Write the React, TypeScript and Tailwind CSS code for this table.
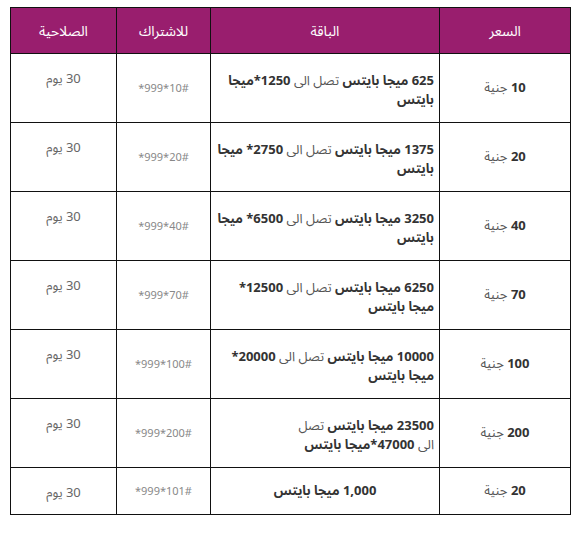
const rows = [
  {
    price: '10',
    lines: [
      [['625 ميجا بايتس', true], [' تصل الى ', false], ['1250*ميجا', true]],
      [['بايتس', true]],
    ],
    code: '*999*10#',
  },
  {
    price: '20',
    lines: [
      [['1375 ميجا بايتس', true], [' تصل الى ', false], ['2750* ميجا', true]],
      [['بايتس', true]],
    ],
    code: '*999*20#',
  },
  {
    price: '40',
    lines: [
      [['3250 ميجا بايتس', true], [' تصل الى ', false], ['6500* ميجا', true]],
      [['بايتس', true]],
    ],
    code: '*999*40#',
  },
  {
    price: '70',
    lines: [
      [['6250 ميجا بايتس', true], [' تصل الى ', false], ['12500*', true]],
      [['ميجا بايتس', true]],
    ],
    code: '*999*70#',
  },
  {
    price: '100',
    lines: [
      [['10000 ميجا بايتس', true], [' تصل الى ', false], ['20000*', true]],
      [['ميجا بايتس', true]],
    ],
    code: '*999*100#',
  },
  {
    price: '200',
    lines: [
      [['23500 ميجا بايتس', true], [' تصل', false]],
      [['الى ', false], ['47000*ميجا بايتس', true]],
    ],
    code: '*999*200#',
  },
] as const

const cell = 'border border-[#111]'

const App: React.FC = () => {
  return (
    <div
      className="min-h-[541px] w-[584px] bg-white pl-[10px] pt-[7px]"
      style={{ fontFamily: '"Noto Sans", "Noto Sans Arabic", "DejaVu Sans", sans-serif' }}
    >
      <table dir="rtl" className="w-[560px] table-fixed border-collapse text-[13px] text-[#555]">
        <colgroup>
          <col className="w-[131px]" />
          <col className="w-[229px]" />
          <col className="w-[94px]" />
          <col className="w-[106px]" />
        </colgroup>
        <thead>
          <tr className="h-[46px] bg-[#991e6e] text-[14px] text-white">
            <th className={`${cell} font-normal`}>السعر</th>
            <th className={`${cell} font-normal`}>الباقة</th>
            <th className={`${cell} font-normal`}>للاشتراك</th>
            <th className={`${cell} font-normal`}>الصلاحية</th>
          </tr>
        </thead>
        <tbody>
          {rows.map((row) => (
            <tr key={row.code} className="h-[69px]">
              {/* السعر */}
              <td className={`${cell} text-center align-middle`}>
                <span className="font-bold text-[#333]">{row.price}</span> جنية
              </td>
              {/* الباقة */}
              <td className={`${cell} pr-[5px] pt-[3px] text-right align-middle`}>
                {row.lines.map((line, i) => (
                  <div key={i} className="h-[19px] overflow-visible whitespace-nowrap leading-[19px]">
                    {line.map(([txt, bold], j) => (
                      <span key={j} className={bold ? 'font-bold text-[#333]' : ''}>
                        {txt}
                      </span>
                    ))}
                  </div>
                ))}
              </td>
              {/* للاشتراك */}
              <td className={`${cell} text-center align-middle text-[11px] text-[#888]`}>
                <span dir="ltr">{row.code}</span>
              </td>
              {/* الصلاحية */}
              <td className={`${cell} pt-[14px] text-center align-top leading-[20px] text-[#666]`}>
                30 يوم
              </td>
            </tr>
          ))}
          <tr className="h-[47px]">
            <td className={`${cell} text-center align-middle`}>
              <span className="font-bold text-[#333]">20</span> جنية
            </td>
            <td className={`${cell} text-center align-middle`}>
              <span className="font-bold text-[#333]">1,000 ميجا بايتس</span>
            </td>
            <td className={`${cell} text-center align-middle text-[11px] text-[#888]`}>
              <span dir="ltr">*999*101#</span>
            </td>
            <td className={`${cell} pt-[14px] text-center align-top leading-[20px] text-[#666]`}>
              30 يوم
            </td>
          </tr>
        </tbody>
      </table>
    </div>
  )
}

export default App
